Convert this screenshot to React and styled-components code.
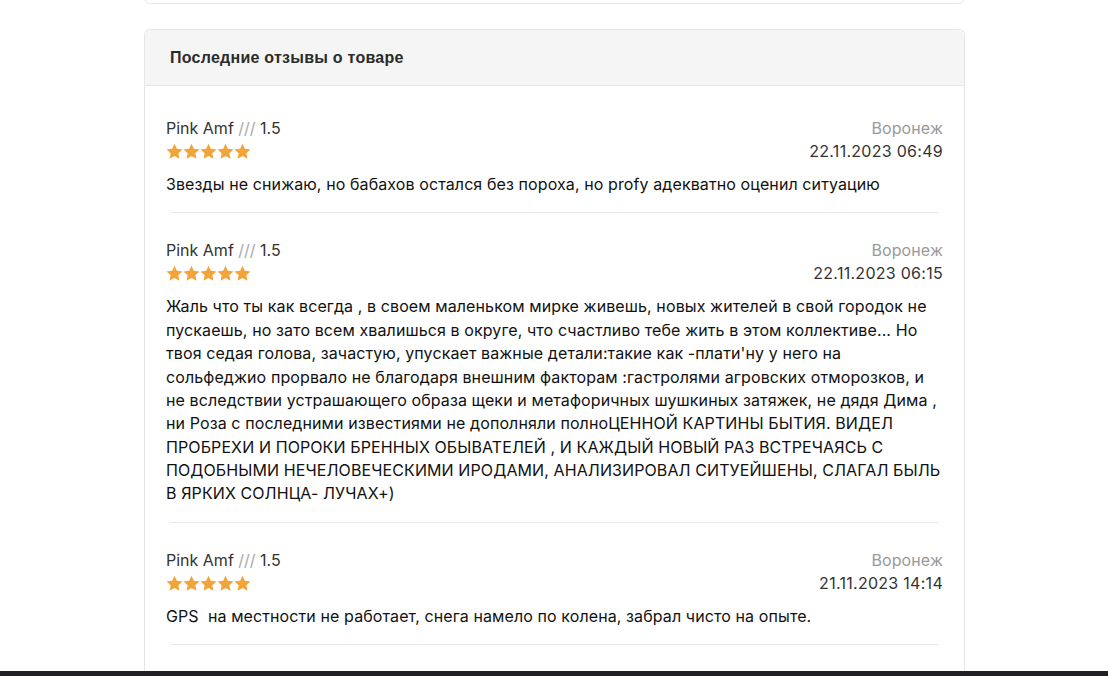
import React from "react";
import styled, { createGlobalStyle } from "styled-components";

const Global = createGlobalStyle`
  html, body { margin: 0; padding: 0; background: #fff; }
  body { font-family: Inter, "Noto Sans", sans-serif; color: #111; }
  * { box-sizing: border-box; }
`;

const Page = styled.div`
  height: 100vh;
  display: flex;
  flex-direction: column;
  overflow: hidden;
`;

const Main = styled.main`
  flex: 1;
  overflow: hidden;
  display: flex;
  flex-direction: column;
  gap: 25px;
  padding: 0 143px 0 144px;
`;

const PrevCard = styled.div`
  height: 44px;
  margin-top: -40px;
  border: 1px solid #e6e6e6;
  border-radius: 6px;
  background: #fff;
  flex-shrink: 0;
`;

const Card = styled.section`
  flex: 1;
  border: 1px solid #e6e6e6;
  border-bottom: none;
  border-radius: 6px 6px 0 0;
  background: #fff;
`;

const CardHeader = styled.header`
  height: 56px;
  display: flex;
  align-items: center;
  padding: 0 25px;
  background: #f5f5f5;
  border-bottom: 1px solid #e6e6e6;
  border-radius: 6px 6px 0 0;
  font-family: "Liberation Sans", Arial, sans-serif;
  font-weight: 700;
  font-size: 16px;
  letter-spacing: 0.25px;
  color: #2b2b2b;
`;

const List = styled.div`
  padding: 5px 21px 0;
`;

const Item = styled.article`
  padding: 26px 0 16px;
`;

const Divider = styled.hr`
  margin: 0 4px;
  border: none;
  border-top: 1px solid #e9e9e9;
`;

const Head = styled.div`
  display: flex;
  justify-content: space-between;
  align-items: flex-start;
`;

const Col = styled.div`
  display: flex;
  flex-direction: column;
  align-items: ${(p) => (p.$right ? "flex-end" : "flex-start")};
  font-size: 16px;
  line-height: 23px;
`;

const Author = styled.div`
  color: #333;
`;

const Slashes = styled.span`
  color: #a9a9a9;
`;

const Stars = styled.div`
  display: flex;
  gap: 0;
  height: 23px;
  align-items: center;
`;

const City = styled.div`
  color: #9a9a9a;
  letter-spacing: 0.1px;
`;

const DateText = styled.div`
  color: #333;
  letter-spacing: 0.28px;
`;

const Body = styled.p`
  margin: 10px 0 0;
  font-size: 16px;
  line-height: 23.375px;
  letter-spacing: 0.1px;
  color: #111;
  white-space: pre-wrap;
`;

const Footer = styled.footer`
  height: 5px;
  background: #1f1f26;
  flex-shrink: 0;
`;

const Star = () => (
  <svg width="17" height="17" viewBox="0 0 24 24">
    <path
      d="M12 1l3.3 7.2 8 .8-6 5.4 1.8 7.9L12 18.2l-7.1 4.1 1.8-7.9-6-5.4 8-.8z"
      fill="#f2a43a"
    />
  </svg>
);

const reviews = [
  {
    date: "22.11.2023 06:49",
    text: "Звезды не снижаю, но бабахов остался без пороха, но profy адекватно оценил ситуацию",
  },
  {
    date: "22.11.2023 06:15",
    text: "Жаль что ты как всегда , в своем маленьком мирке живешь, новых жителей в свой городок не пускаешь, но зато всем хвалишься в округе, что счастливо тебе жить в этом коллективе... Но твоя седая голова, зачастую, упускает важные детали:такие как -плати'ну у него на сольфеджио прорвало не благодаря внешним факторам :гастролями агровских отморозков, и не вследствии устрашающего образа щеки и метафоричных шушкиных затяжек, не дядя Дима , ни Роза с последними известиями не дополняли полноЦЕННОЙ КАРТИНЫ БЫТИЯ. ВИДЕЛ ПРОБРЕХИ И ПОРОКИ БРЕННЫХ ОБЫВАТЕЛЕЙ , И КАЖДЫЙ НОВЫЙ РАЗ ВСТРЕЧАЯСЬ С ПОДОБНЫМИ НЕЧЕЛОВЕЧЕСКИМИ ИРОДАМИ, АНАЛИЗИРОВАЛ СИТУЕЙШЕНЫ, СЛАГАЛ БЫЛЬ В ЯРКИХ СОЛНЦА- ЛУЧАХ+)",
  },
  {
    date: "21.11.2023 14:14",
    text: "GPS  на местности не работает, снега намело по колена, забрал чисто на опыте.",
  },
];

export default function App() {
  return (
    <Page>
      <Global />
      <Main>
        <PrevCard />
        <Card>
          <CardHeader>Последние отзывы о товаре</CardHeader>
          <List>
            {reviews.map((r, i) => (
              <React.Fragment key={i}>
                <Item>
                  <Head>
                    <Col>
                      <Author>
                        Pink Amf <Slashes>///</Slashes> 1.5
                      </Author>
                      <Stars>
                        {[0, 1, 2, 3, 4].map((s) => (
                          <Star key={s} />
                        ))}
                      </Stars>
                    </Col>
                    <Col $right>
                      <City>Воронеж</City>
                      <DateText>{r.date}</DateText>
                    </Col>
                  </Head>
                  <Body>{r.text}</Body>
                </Item>
                <Divider />
              </React.Fragment>
            ))}
          </List>
        </Card>
      </Main>
      <Footer />
    </Page>
  );
}
